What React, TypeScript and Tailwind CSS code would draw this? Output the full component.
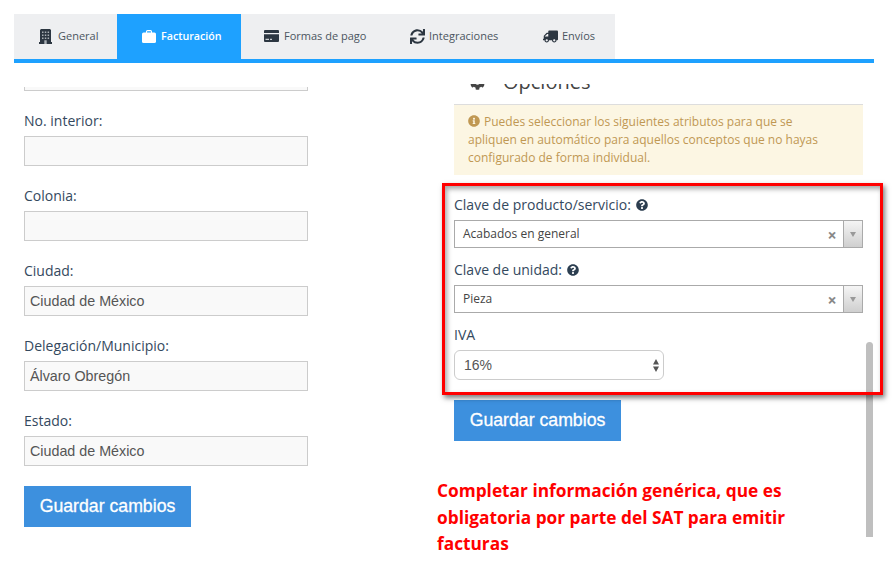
import type { ReactNode } from "react";
import { FaCog, FaInfoCircle, FaQuestionCircle, FaSync, FaTruck } from "react-icons/fa";

function BuildingIcon() {
  return (
    <svg width="13" height="16" viewBox="0 0 13 16">
      <path d="M1.5 1h10v1h.5v12h1v2H0v-2h1V2h.5z" fill="#2c3641" />
      <path
        d="M3 3.5h1.5V5H3zM5.8 3.5h1.5V5H5.8zM8.6 3.5h1.5V5H8.6zM3 6.5h1.5V8H3zM5.8 6.5h1.5V8H5.8zM8.6 6.5h1.5V8H8.6zM3 9.5h1.5V11H3zM5.8 9.5h1.5V11H5.8zM8.6 9.5h1.5V11H8.6zM5.3 12.3h2.4V16H5.3z"
        fill="#a9afb5"
      />
    </svg>
  );
}

function BriefcaseIcon() {
  return (
    <svg width="14" height="13" viewBox="0 0 14 13">
      <path d="M4.5 3V1.6C4.5 1 5 .6 5.5.6h3c.6 0 1 .4 1 1V3" fill="none" stroke="#ffffff" strokeWidth="1.1" />
      <rect x="0" y="2.6" width="14" height="10.4" rx="1.6" fill="#ffffff" />
    </svg>
  );
}

function CardIcon() {
  return (
    <svg width="15" height="12" viewBox="0 0 15 12">
      <path d="M1 0h13a1 1 0 0 1 1 1v2H0V1a1 1 0 0 1 1-1zM0 4.2h15V11a1 1 0 0 1-1 1H1a1 1 0 0 1-1-1z" fill="#2c3641" />
      <path d="M1.5 8.8h3.5v1.2H1.5zM6 8.8h2v1.2H6z" fill="#c9cdd1" />
    </svg>
  );
}

const tabs = [
  { label: "General", icon: <BuildingIcon />, spacing: "w-[103px] pl-[25px] gap-[6px]" },
  { label: "Facturación", icon: <BriefcaseIcon />, spacing: "w-[124px] pl-[25px] gap-[5px]", active: true },
  { label: "Formas de pago", icon: <CardIcon />, spacing: "w-[145px] pl-[23px] gap-[5px]" },
  { label: "Integraciones", icon: <FaSync size={15} />, spacing: "w-[132px] pl-[24px] gap-[4px]" },
  { label: "Envíos", icon: <FaTruck size={15} className="-scale-x-100" />, spacing: "w-[97px] pl-[25px] gap-[4px]" },
];

const fields = [
  { label: "No. interior:", value: "" },
  { label: "Colonia:", value: "" },
  { label: "Ciudad:", value: "Ciudad de México" },
  { label: "Delegación/Municipio:", value: "Álvaro Obregón" },
  { label: "Estado:", value: "Ciudad de México" },
];

function SaveButton() {
  return (
    <button className="mt-5 h-[41px] w-[167px] bg-[#3d90de] font-['Liberation_Sans',sans-serif] text-[17.7px] font-normal text-white [-webkit-text-stroke:0.3px_white]">
      Guardar cambios
    </button>
  );
}

function Label({ children, className }: { children: ReactNode; className: string }) {
  return <div className={`flex h-5 items-center gap-[5px] text-sm leading-5 text-[#34495e] ${className}`}>{children}</div>;
}

function ComboBox({ value }: { value: string }) {
  return (
    <div className="flex h-[28px] border border-[#aaaaaa] bg-white text-xs text-[#444444]">
      <div className="flex flex-1 items-center pl-2">{value}</div>
      <div className="flex w-[22px] items-center justify-center pt-[2px] text-[16px] font-bold leading-none text-[#888888]">×</div>
      <div className="flex w-[19px] items-center justify-center border-l border-[#aaaaaa] bg-gradient-to-b from-[#f5f5f5] to-[#cfcfcf]">
        <svg width="6" height="5" viewBox="0 0 6 5">
          <path d="M0 0h6L3 5z" fill="#999999" />
        </svg>
      </div>
    </div>
  );
}

export default function App() {
  return (
    <div className="relative h-[577px] w-[892px] overflow-hidden bg-white font-['Open_Sans',sans-serif]">
      {/* Tabs */}
      <div className="pl-[14px] pt-[14px]">
        <div className="flex h-[49px] w-[860px] border-b-4 border-[#1ea1ff]">
          {tabs.map((tab) => (
            <div
              key={tab.label}
              className={
                tab.active
                  ? `flex h-[45px] items-center bg-[#1ea1ff] pb-px text-[10.7px] font-semibold text-white ${tab.spacing}`
                  : `flex h-[45px] items-center bg-[#eeeff1] pb-px text-[11px] text-[#4b5560] [&>svg]:text-[#2c3641] ${tab.spacing}`
              }
            >
              {tab.icon}
              <span>{tab.label}</span>
            </div>
          ))}
        </div>
      </div>

      <div className="flex pl-6">
        {/* Left column */}
        <div className="w-[284px]">
          <div className="mt-6 h-1 border-x border-b border-[#cccccc] bg-[#f9f9f9]" />
          {fields.map((field) => (
            <div key={field.label}>
              <Label className="mb-[5px] mt-5">{field.label}</Label>
              <div className="flex h-[30px] items-center border border-[#cccccc] bg-[#f9f9f9] pl-[5px] pt-px font-['Liberation_Sans',sans-serif] text-[14.3px] text-[#555555]">
                {field.value}
              </div>
            </div>
          ))}
          <SaveButton />
        </div>

        {/* Right column */}
        <div className="ml-[146px] w-[409px]">
          <div className="mt-[21px] h-[21px] overflow-hidden border-b border-[#dddddd]">
            <div className="-mt-[16px] flex items-center gap-[18px] pl-4 text-xl leading-7 text-[#444444]">
              <FaCog size={15} />
              <span>Opciones</span>
            </div>
          </div>
          <div className="h-[70px] bg-[#fcf6e3] pl-[14px] pr-[35px] pt-2 text-xs leading-[18px] text-[#c09853]">
            <FaInfoCircle size={12} className="mr-1 inline align-[-1px]" />
            Puedes seleccionar los siguientes atributos para que se apliquen en automático para aquellos conceptos que no hayas configurado de forma individual.
          </div>
          <Label className="mb-[5px] mt-5">
            Clave de producto/servicio: <FaQuestionCircle size={12} className="text-[#2c3e50]" />
          </Label>
          <ComboBox value="Acabados en general" />
          <Label className="mb-[5px] mt-3">
            Clave de unidad: <FaQuestionCircle size={12} className="text-[#2c3e50]" />
          </Label>
          <ComboBox value="Pieza" />
          <Label className="mb-[5px] mt-3">IVA</Label>
          <div className="flex h-[30px] w-[210px] items-center justify-between rounded-md border border-[#cccccc] bg-white pl-[9px] pr-[4px] font-['Liberation_Sans',sans-serif] text-sm text-[#555555]">
            <span>16%</span>
            <svg width="6" height="13" viewBox="0 0 6 13">
              <path d="M3 0l3 5.5H0zM3 13L0 7.5h6z" fill="#555555" />
            </svg>
          </div>
          <SaveButton />
          <p className="-ml-[17px] mt-[37px] w-[370px] text-[17.3px] font-bold leading-[26.5px] text-[#ff0000]">
            Completar información genérica, que es obligatoria por parte del SAT para emitir facturas
          </p>
        </div>
      </div>

      {/* Scrollbar */}
      <div className="absolute left-[866px] top-[342px] h-[195px] w-[7px] rounded-t-sm bg-[#bfbfbf]" />

      {/* Annotation box */}
      <div className="absolute left-[442px] top-[183px] h-[212px] w-[441px] border-[3px] border-[#ff0000] shadow-[2px_3px_5px_rgba(0,0,0,0.5),inset_2px_3px_5px_rgba(0,0,0,0.35)]" />
    </div>
  );
}
